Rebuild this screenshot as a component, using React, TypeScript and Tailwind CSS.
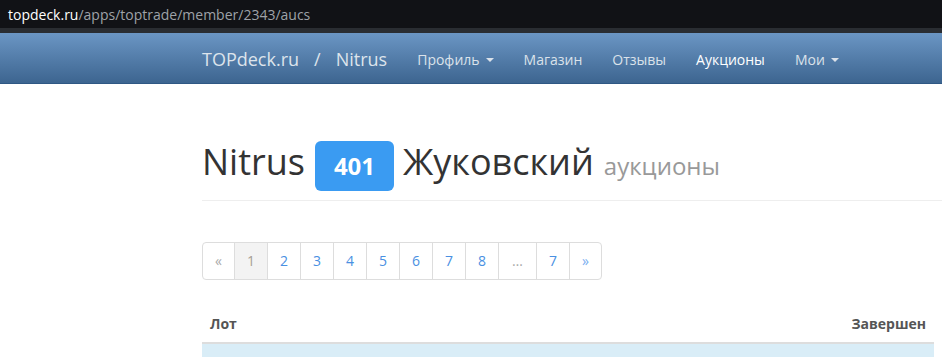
import React from 'react';

const navLinks = [
  { label: 'Профиль', caret: true, active: false },
  { label: 'Магазин', caret: false, active: false },
  { label: 'Отзывы', caret: false, active: false },
  { label: 'Аукционы', caret: false, active: true },
  { label: 'Мои', caret: true, active: false },
];

const pages = ['1', '2', '3', '4', '5', '6', '7', '8', '…', '7'];

function Caret() {
  return (
    <span className="ml-[6px] inline-block h-0 w-0 border-x-[4px] border-t-[4px] border-x-transparent border-t-current align-middle" />
  );
}

export default function App() {
  return (
    <div
      className="h-[357px] w-[942px] overflow-hidden bg-white"
      style={{ fontFamily: '"Open Sans", "Noto Sans", sans-serif' }}
    >
      {/* browser address bar */}
      <div className="flex h-[28px] items-center bg-[#111216] pl-[8px] text-[14px]">
        <span className="text-white">topdeck.ru</span>
        <span className="text-[#9ea2a8]">/apps/toptrade/member/2343/aucs</span>
      </div>
      <div className="h-[5px] bg-[#2a2d32]" />

      {/* navbar */}
      <nav className="flex h-[51px] items-center border-b border-[#2f5884] bg-gradient-to-b from-[#6b96c4] to-[#3d6590] pl-[202px] pt-[3px] text-[#dde4ec]">
        <span className="text-[18px]">TOPdeck.ru</span>
        <span className="mx-[15px] text-[18px]">/</span>
        <span className="text-[18px]">Nitrus</span>
        <ul className="ml-[15px] flex items-center text-[14px]">
          {navLinks.map((l) => (
            <li
              key={l.label}
              className={`flex items-center px-[15px] ${l.active ? 'text-white' : 'text-[#dbe2ea]'}`}
            >
              {l.label}
              {l.caret && <Caret />}
            </li>
          ))}
        </ul>
      </nav>

      <main className="ml-[202px] w-[740px]">
        {/* page header */}
        <div className="mt-[57px] flex items-baseline border-b border-[#eeeeee] pb-[9px] text-[36px] leading-[1.1] text-[#333]">
          <span>Nitrus</span>
          <span className="ml-[10px] flex h-[50px] w-[79px] items-center justify-center rounded-[6px] bg-[#3a9bf2] text-[24px] font-bold text-white">
            401
          </span>
          <span className="ml-[9px]">Жуковский</span>
          <span className="ml-[10px] text-[24px] text-[#999]">аукционы</span>
        </div>

        {/* pagination */}
        <ul className="mt-[41px] inline-flex rounded-[4px] text-[14px] leading-[20px]">
          <li className="rounded-l-[4px] border border-[#ddd] px-[12px] py-[8px] text-[#aaa]">«</li>
          {pages.map((p, i) => (
            <li
              key={i}
              className={`-ml-px border border-[#ddd] py-[8px] ${p === '…' ? 'px-[13px]' : 'px-[12px]'} ${
                i === 0
                  ? 'bg-[#f3f3f3] text-[#a89f94]'
                  : p === '…'
                    ? 'text-[#aaa]'
                    : 'text-[#4a90e2]'
              }`}
            >
              {p}
            </li>
          ))}
          <li className="-ml-px rounded-r-[4px] border border-[#ddd] px-[12px] py-[8px] text-[#7aaef0]">»</li>
        </ul>

        {/* table */}
        <table className="mt-[26px] w-[732px] border-collapse text-[14px] leading-[20px]">
          <thead>
            <tr className="border-b-2 border-[#ddd]">
              <th className="p-[8px] text-left font-bold text-[#555]">Лот</th>
              <th className="p-[8px] text-right font-bold text-[#555]">Завершен</th>
            </tr>
          </thead>
          <tbody>
            <tr className="bg-[#d9edf7]">
              <td className="px-[8px] pt-[12px] text-[#4a90e2]">Лот №1 (Nitrus)</td>
              <td className="px-[8px] pt-[12px] text-right text-[#333]">&nbsp;</td>
            </tr>
          </tbody>
        </table>
      </main>
    </div>
  );
}
